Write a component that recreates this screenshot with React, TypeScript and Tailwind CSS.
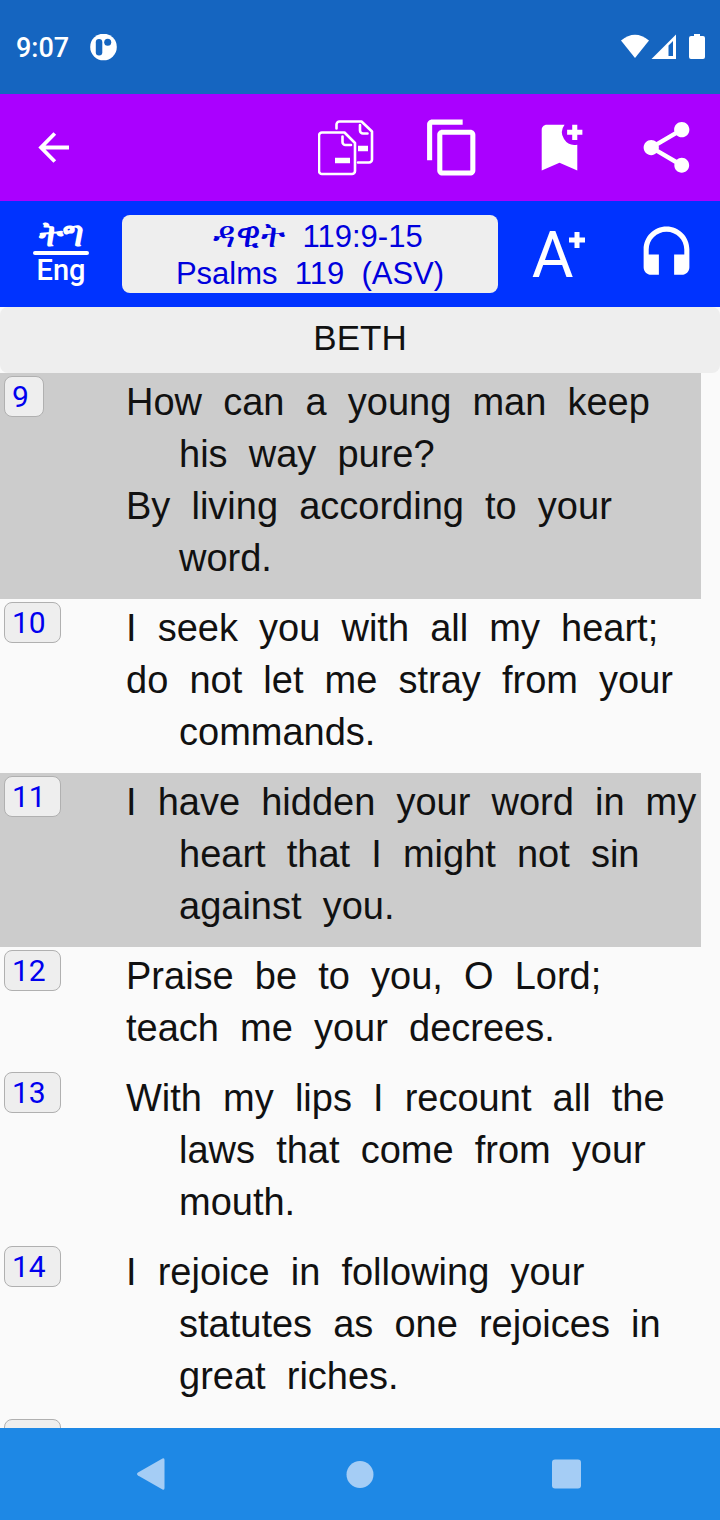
import type { ReactNode } from "react";

type Verse = { number: number; lines: string[] };

const verses: Verse[] = [
  { number: 9, lines: ["How  can  a  young  man  keep  his  way  pure?", "By  living  according  to  your  word."] },
  { number: 10, lines: ["I  seek  you  with  all  my  heart;", "do  not  let  me  stray  from  your  commands."] },
  { number: 11, lines: ["I  have  hidden  your  word  in  my  heart  that  I  might  not  sin  against  you."] },
  { number: 12, lines: ["Praise  be  to  you,  O  Lord;", "teach  me  your  decrees."] },
  { number: 13, lines: ["With  my  lips  I  recount  all  the  laws  that  come  from  your  mouth."] },
  { number: 14, lines: ["I  rejoice  in  following  your  statutes  as  one  rejoices  in  great  riches."] },
];

function IconButton({ label, children }: { label: string; children: ReactNode }) {
  return (
    <button type="button" aria-label={label} className="flex h-full w-[107px] shrink-0 items-center justify-center">
      {children}
    </button>
  );
}

function MaterialIcon({ d }: { d: string }) {
  return (
    <svg viewBox="0 0 24 24" className="size-[61px] fill-current" aria-hidden="true">
      <path d={d} />
    </svg>
  );
}

function StatusBar() {
  return (
    <div className="flex h-[94px] shrink-0 items-center bg-[#1565c0] pt-0.5 pr-3 pl-4 text-white">
      <span className="font-[Roboto,sans-serif] text-[27px] font-medium">9:07</span>
      <svg viewBox="0 0 28 28" className="ml-5 size-7" aria-hidden="true">
        <circle cx="14.500" cy="13" r="13.300" fill="#fff" />
        <rect x="6.800" y="5" width="6.500" height="16.500" rx="3.200" fill="#1565c0" />
        <circle cx="18.700" cy="8.300" r="3.500" fill="#1565c0" />
      </svg>
      <svg viewBox="0 0 88 28" className="ml-auto h-7 w-[88px]" fill="#fff" aria-hidden="true">
        <path d="M1 6.500Q15 -5 29 6.500L15 24z" />
        <path fillRule="evenodd" d="M31.500 25L56 .5V25zM48.500 11.500V22H53V7z" />
        <path d="M74 0h6v2h3a2 2 0 0 1 2 2v19a2 2 0 0 1-2 2H71a2 2 0 0 1-2-2v-19a2 2 0 0 1 2-2h3z" />
      </svg>
    </div>
  );
}

function ActionBar() {
  return (
    <header className="flex h-[107px] shrink-0 items-center bg-[#aa00ff] text-white">
      <IconButton label="Back">
        <svg viewBox="0 0 32 32" className="size-8" fill="none" stroke="currentColor" strokeWidth="3.800" aria-hidden="true">
          <path d="M31 15.500H3.500M16.800 1.500L3 15.500l13.800 14" />
        </svg>
      </IconButton>
      <div className="ml-auto flex h-full">
        <IconButton label="Copy with translation">
          <svg viewBox="0 0 56 56" className="size-14" fill="none" stroke="currentColor" strokeWidth="2.600" strokeLinecap="round" strokeLinejoin="round" aria-hidden="true">
            <path d="M4 12.500H26.500L37 23V51a3 3 0 0 1-3 3H4a3 3 0 0 1-3-3V15.500a3 3 0 0 1 3-3z" />
            <path d="M24.500 16.500v5.500a3 3 0 0 0 3 3h5.500" />
            <path d="M18.500 8.500V4.500a3 3 0 0 1 3-3H43.500L54 11.500V39.500a3 3 0 0 1-3 3H40" />
            <path d="M42 5v5.500a3 3 0 0 0 3 3H49.500" />
            <path d="M17 40.500H32M40 28.500H50" strokeWidth="5.500" strokeLinecap="butt" />
          </svg>
        </IconButton>
        <IconButton label="Copy">
          <MaterialIcon d="M16 1H4c-1.100 0-2 .9-2 2v14h2V3h12V1zm3 4H8c-1.100 0-2 .9-2 2v14c0 1.100.9 2 2 2h11c1.100 0 2-.9 2-2V7c0-1.100-.9-2-2-2zm0 16H8V7h11v14z" />
        </IconButton>
        <IconButton label="Add bookmark">
          <MaterialIcon d="M21 7h-2v2h-2V7h-2V5h2V3h2v2h2v2zm-2 14l-7-3-7 3V5c0-1.100.9-2 2-2h7a5.002 5.002 0 0 0 5 7.900V21z" />
        </IconButton>
        <IconButton label="Share">
          <MaterialIcon d="M18 16.080c-.76 0-1.440.3-1.960.77L8.910 12.700c.05-.23.09-.46.09-.7s-.04-.47-.09-.7l7.050-4.110c.54.5 1.250.81 2.040.81 1.660 0 3-1.340 3-3s-1.340-3-3-3-3 1.340-3 3c0 .24.04.47.09.7L8.040 9.810C7.500 9.310 6.790 9 6 9c-1.660 0-3 1.340-3 3s1.340 3 3 3c.79 0 1.500-.31 2.040-.81l7.120 4.160c-.05.21-.08.43-.08.65 0 1.610 1.310 2.920 2.920 2.920s2.920-1.310 2.920-2.920-1.310-2.920-2.920-2.920z" />
        </IconButton>
      </div>
    </header>
  );
}

function PassageBar() {
  return (
    <div className="flex h-[106px] shrink-0 items-center bg-[#0033ff] text-white">
      <button type="button" className="flex w-[122px] shrink-0 flex-col items-center pb-1 font-[Roboto,sans-serif] font-medium">
        <span className="text-[36px] leading-[30px] font-bold">ትግ</span>
        <span className="mt-0.5 h-1 w-14 rounded-full bg-white" />
        <span className="text-[29px] leading-[30px]">Eng</span>
      </button>
      <button type="button" className="mr-2 flex-1 rounded-lg bg-[#eeeeee] pt-0.5 text-[31px] leading-[38px] whitespace-pre text-[#0000dd]">
        <span className="block h-[38px] pl-4"><span className="text-[36px] leading-none font-medium">ዳዊት</span>  119:9-15</span>
        <span className="block">Psalms  119  (ASV)</span>
      </button>
      <button type="button" aria-label="Increase text size" className="flex h-full w-[107px] shrink-0 items-center justify-center pt-1 pr-0.5">
        <span className="font-[Roboto,sans-serif] text-[64px] leading-[64px]">A</span>
        <svg viewBox="0 0 16 16" className="-ml-1 mb-8 size-4 fill-current" aria-hidden="true">
          <path d="M5.500 0h5v5.500H16v5h-5.500V16h-5v-5.500H0v-5h5.500z" />
        </svg>
      </button>
      <IconButton label="Listen">
        <MaterialIcon d="M12 1c-4.970 0-9 4.030-9 9v7c0 1.660 1.340 3 3 3h3v-8H5v-2c0-3.870 3.130-7 7-7s7 3.130 7 7v2h-4v8h3c1.660 0 3-1.340 3-3v-7c0-4.970-4.030-9-9-9z" />
      </IconButton>
    </div>
  );
}

function VerseRow({ verse, shaded }: { verse: Verse; shaded: boolean }) {
  return (
    <li className={shaded ? "flex bg-[#cccccc] pt-[3px] pb-[15px]" : "flex pt-[3px] pb-[15px]"}>
      <div className="w-[126px] shrink-0 pl-1">
        <button type="button" className="h-[41px] rounded-lg border border-[#b0b0b0] bg-[#eeeeee] pr-3.5 pl-[7px] font-[Roboto,sans-serif] text-[30px] leading-[39px] text-[#0000ee]">
          {verse.number}
        </button>
      </div>
      <div className="min-w-0 flex-1 text-[38px] leading-[52px] whitespace-pre-wrap">
        {verse.lines.map((line) => (
          <p key={line} className="pl-[53px] -indent-[53px]">
            {line}
          </p>
        ))}
      </div>
    </li>
  );
}

function NavigationBar() {
  return (
    <nav className="flex h-[92px] shrink-0 items-center justify-between bg-[#1e88e5] pr-[135px] pl-[133px] text-[#a5cdf5]">
      <button type="button" aria-label="Back">
        <svg viewBox="0 0 36 36" className="size-9 fill-current" aria-hidden="true">
          <path d="M29.500 2.500Q31.500 1.500 31.500 4V32Q31.500 34.500 29.500 33.500L5 19.500Q3 18 5 16.500z" />
        </svg>
      </button>
      <button type="button" aria-label="Home">
        <svg viewBox="0 0 36 36" className="size-9 fill-current" aria-hidden="true">
          <circle cx="19" cy="18.500" r="13.500" />
        </svg>
      </button>
      <button type="button" aria-label="Recent apps">
        <svg viewBox="0 0 36 36" className="size-9 fill-current" aria-hidden="true">
          <rect x="3" y="3.500" width="29" height="29" rx="3" />
        </svg>
      </button>
    </nav>
  );
}

export default function App() {
  return (
    <div className="flex h-screen flex-col bg-[#fafafa] font-['Liberation_Sans',Arial,sans-serif] text-[#111111]">
      <StatusBar />
      <ActionBar />
      <PassageBar />
      <main className="min-h-0 flex-1 overflow-y-auto [scrollbar-width:none]">
        <h1 className="rounded-lg bg-[#eeeeee] pt-[5px] pb-[9px] text-center text-[35px] leading-[52px]">BETH</h1>
        <ol className="mr-[19px]">
          {verses.map((verse) => (
            <VerseRow key={verse.number} verse={verse} shaded={verse.number === 9 || verse.number === 11} />
          ))}
          <li className="flex pt-0.5 pl-1">
            <button type="button" aria-label="Next verse" className="h-[41px] w-[57px] rounded-lg border border-[#b0b0b0] bg-[#eeeeee]" />
          </li>
        </ol>
      </main>
      <NavigationBar />
    </div>
  );
}
